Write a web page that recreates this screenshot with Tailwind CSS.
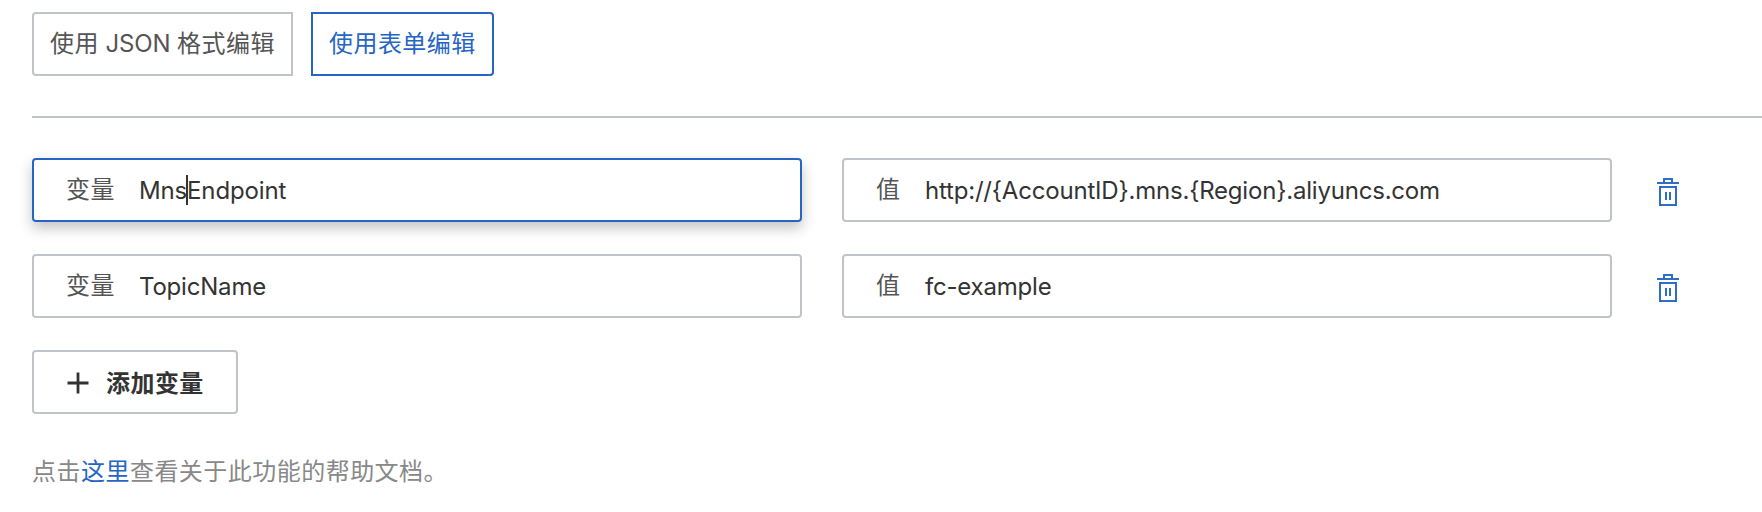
<!DOCTYPE html>
<html lang="zh-CN">
<head>
<meta charset="utf-8">
<title>环境变量</title>
<script src="https://cdn.jsdelivr.net/npm/@tailwindcss/browser@4"></script>
</head>
<body class="h-[512px] overflow-hidden bg-white pl-8 pt-3 font-['Inter','Noto_Sans_CJK_SC',sans-serif] text-2xl leading-8 text-[#333333]">
  <div class="flex gap-[18px]">
    <button class="h-16 w-[261px] whitespace-pre rounded-l border-2 border-[#c0c4c9] pl-4 text-left tracking-[0.45px] text-[#555555]">使用<span class="tracking-[-0.15px]"> JSON </span>格式编辑</button>
    <button class="h-16 w-[183px] whitespace-nowrap rounded-r border-2 border-[#2765c4] pl-4 text-left tracking-[0.45px] text-[#2765c4]">使用表单编辑</button>
  </div>
  <hr class="mt-10 border-0 border-t-2 border-[#c0c4c9]">
  <div class="mt-10 flex flex-col gap-8">
    <div class="flex items-center">
      <div class="flex h-16 w-[770px] items-center rounded border-2 border-[#2765c4] pl-8 shadow-[0_6px_14px_rgba(0,0,0,0.24)]">
        <span class="w-[73px] tracking-[0.45px] text-[#555555]">变量</span><span class="flex items-center tracking-[-0.15px]"><span class="pt-0.5">Mns</span><span class="-mx-px h-[30px] w-0.5 bg-[#333333]"></span><span class="pt-0.5">Endpoint</span></span>
      </div>
      <div class="ml-10 flex h-16 w-[770px] items-center rounded border-2 border-[#c0c4c9] pl-8">
        <span class="w-[49px] text-[#555555]">值</span><span class="pt-0.5 tracking-[-0.2px]">http://{AccountID}.mns.{Region}.aliyuncs.com</span>
      </div>
      <svg class="ml-[45px] mt-1 h-7 w-[22px]" viewBox="0 0 22 28" fill="none" stroke="#2d6fc8" stroke-width="2"><path d="M0 5h22M7 4V1h8v3M3 9h16v18H3zM9 14v8M13 14v8"/></svg>
    </div>
    <div class="flex items-center">
      <div class="flex h-16 w-[770px] items-center rounded border-2 border-[#c0c4c9] pl-8">
        <span class="w-[73px] tracking-[0.45px] text-[#555555]">变量</span><span class="pt-0.5 tracking-[-0.2px]">TopicName</span>
      </div>
      <div class="ml-10 flex h-16 w-[770px] items-center rounded border-2 border-[#c0c4c9] pl-8">
        <span class="w-[49px] text-[#555555]">值</span><span class="pt-0.5 tracking-[-0.2px]">fc-example</span>
      </div>
      <svg class="ml-[45px] mt-1 h-7 w-[22px]" viewBox="0 0 22 28" fill="none" stroke="#2d6fc8" stroke-width="2"><path d="M0 5h22M7 4V1h8v3M3 9h16v18H3zM9 14v8M13 14v8"/></svg>
    </div>
  </div>
  <button class="mt-8 flex h-16 w-[206px] items-center whitespace-nowrap rounded border-2 border-[#c0c4c9] pl-[33px]">
    <svg class="mt-0.5 h-[22px] w-[22px]" viewBox="0 0 22 22" fill="none" stroke="#333333" stroke-width="2.8"><path d="M0.5 11h21M11 0.5v21"/></svg>
    <span class="ml-[17px] pt-[3px] font-bold tracking-[0.45px]">添加变量</span>
  </button>
  <p class="mt-[42px] whitespace-nowrap tracking-[0.47px] text-[#888888]">点击<a class="text-[#2765c4]">这里</a>查看关于此功能的帮助文档。</p>
</body>
</html>
